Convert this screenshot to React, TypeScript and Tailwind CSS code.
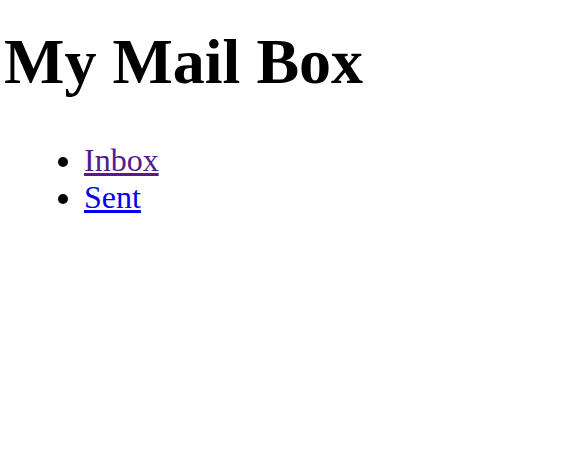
const links = [
  { label: "Inbox", href: "#inbox", visited: true },
  { label: "Sent", href: "#sent", visited: false },
];

export default function App() {
  return (
    <div className="min-h-[466px] bg-white px-[4px] text-black" style={{ fontFamily: '"Liberation Serif", "Times New Roman", serif' }}>
      <h1 className="pt-[25px] text-[64px] font-bold leading-[74px]">My Mail Box</h1>
      <ul className="mt-[43px] list-disc pl-[80px] text-[32px] leading-[37px]">
        {links.map((link) => (
          <li key={link.label}>
            <a
              href={link.href}
              className={`underline ${link.visited ? "text-[#551a8b]" : "text-[#0000ee]"}`}
            >
              {link.label}
            </a>
          </li>
        ))}
      </ul>
    </div>
  );
}
